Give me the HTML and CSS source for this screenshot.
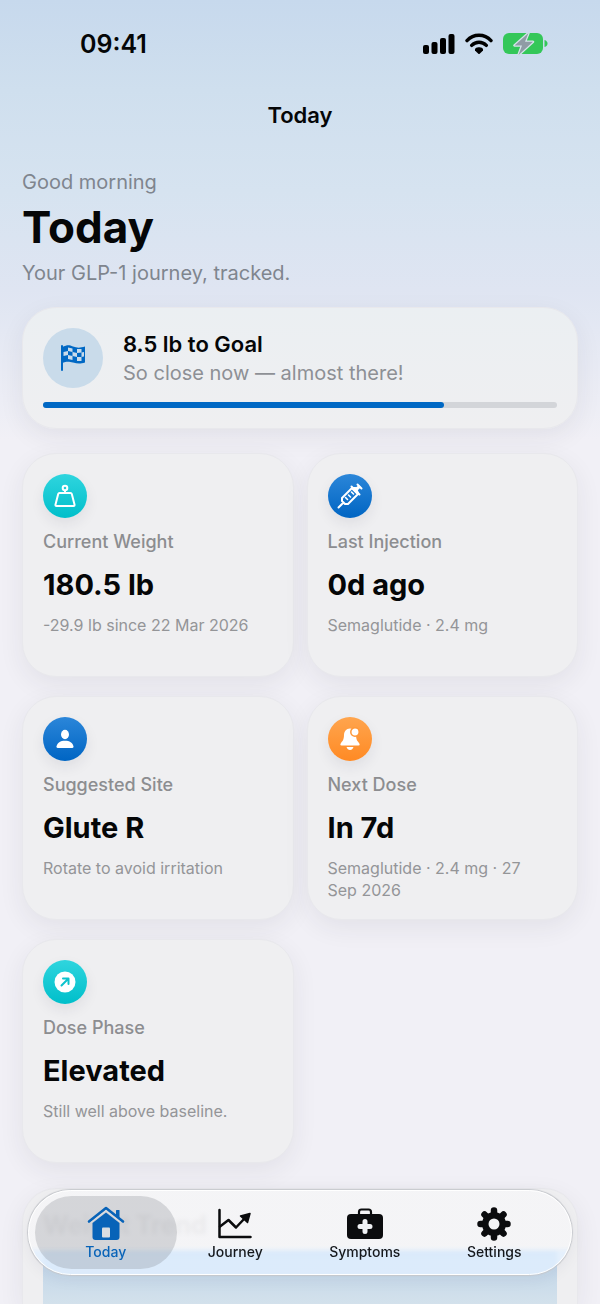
FILE: index.html
```html
<!doctype html>
<html lang="en">
<head>
    <meta charset="UTF-8">
    <meta name="viewport" content="width=device-width, initial-scale=1.0">
    <title>Today</title>
    <link rel="stylesheet" href="styles.css">
</head>
<body>
    <!-- Status bar -->
    <div class="status-bar">
        <span class="clock">09:41</span>
        <div class="status-icons">
            <svg width="32" height="22" viewBox="0 0 32 22">
                <rect x="0" y="12" width="6" height="9" rx="2"/>
                <rect x="8.500" y="9" width="6" height="12" rx="2"/>
                <rect x="17" y="5" width="6" height="16" rx="2"/>
                <rect x="25.500" y="1" width="6" height="20" rx="2"/>
            </svg>
            <svg width="28" height="22" viewBox="0 0 28 22">
                <path d="M2 7.6C8.5 .4 19.500 .4 26 7.600M6.700 12.400C10.800 8.200 17.200 8.200 21.300 12.400" fill="none" stroke="#000" stroke-width="3.400" stroke-linecap="round"/>
                <path d="M10 17.500C9.500 15 12 14.300 14 14.300S18.500 15 18 17.500L14.700 20.700Q14 21.300 13.300 20.700Z"/>
            </svg>
            <svg width="45" height="22" viewBox="0 0 45 22">
                <rect width="40" height="21" rx="6" fill="#34c759"/>
                <path d="M41.500 7Q44.500 8 44.500 10.500T41.500 14Z" fill="#34c759"/>
                <path d="M25.500 0L11.500 12.500H19L15.500 22L30 8.800H22Z" fill="#8f9ca5" stroke="#d5e4ea" stroke-width="2.500" stroke-linejoin="round" paint-order="stroke"/>
            </svg>
        </div>
    </div>

    <div class="nav-title">Today</div>

    <main>
        <header class="intro">
            <p>Good morning</p>
            <h1>Today</h1>
            <p>Your GLP-1 journey, tracked.</p>
        </header>

        <!-- Goal -->
        <section class="card goal">
            <div class="goal-top">
                <div class="goal-icon">
                    <svg width="26" height="28" viewBox="0 0 26 28">
                        <path d="M2 2V26" stroke="#0068c4" stroke-width="2" stroke-linecap="round"/>
                        <path d="M2 3C8 .5 9 1 13 2.500S20 4 25 2.500V18.500C20 20 17 19.500 13 18.500S7 17 2 19Z" fill="#0068c4"/>
                        <path d="M8 3.500L12.500 4.500V8L8 7ZM17 5L21.500 5V8.500L17 9ZM3.500 8L8 7V11L3.500 12ZM12.500 8L17 9V13L12.500 12ZM21.500 8.500L24 8V12.500L21.500 13ZM8 11L12.500 12V16L8 15ZM17 13L21.500 13V17L17 17Z" fill="#c9dbea"/>
                    </svg>
                </div>
                <div>
                    <h2>8.5 lb to Goal</h2>
                    <p>So close now — almost there!</p>
                </div>
            </div>
            <div class="track"><div class="fill" style="width: 78%"></div></div>
        </section>

        <!-- Stats -->
        <div class="grid">
            <section class="card stat">
                <div class="badge teal">
                    <svg width="24" height="24" viewBox="0 0 24 24" fill="none" stroke="#fff" stroke-width="2" stroke-linejoin="round">
                        <circle cx="12" cy="4" r="2.300"/>
                        <path d="M12 6.500V9M6.500 9H17.500Q18.500 9 18.800 10L21.500 20.500Q21.800 22 20.500 22H3.500Q2.200 22 2.500 20.500L5.200 10Q5.500 9 6.500 9Z"/>
                    </svg>
                </div>
                <h3>Current Weight</h3>
                <strong>180.5 lb</strong>
                <p>-29.9 lb since 22 Mar 2026</p>
            </section>
            <section class="card stat">
                <div class="badge blue">
                    <svg width="26" height="26" viewBox="0 0 26 26" fill="none" stroke="#fff" stroke-width="2" stroke-linecap="round" stroke-linejoin="round">
                        <path d="M1.500 24.500L6 20M5 18L8 21L11 21L21 11L15 5L5 15ZM14.500 3.500L22.500 11.500M18 7L22 3M20.500 1.500L24.500 5.500" />
                        <path d="M16 5.500L20.500 10L18.500 5.500ZM20 6L22 4" stroke-width="3"/>
                        <path d="M8.500 14.500L10.500 16.500M11.500 12L13.500 14M14.500 9L16.500 11" stroke-width="1.600"/>
                    </svg>
                </div>
                <h3>Last Injection</h3>
                <strong>0d ago</strong>
                <p>Semaglutide · 2.4 mg</p>
            </section>
            <section class="card stat">
                <div class="badge blue">
                    <svg width="24" height="24" viewBox="0 0 24 24" fill="#fff">
                        <ellipse cx="12" cy="7.500" rx="4" ry="4.700"/>
                        <path d="M5 21Q3.300 21 3.500 19.500C4.200 15.800 7.500 13.800 12 13.800S19.800 15.800 20.500 19.500Q20.700 21 19 21Z"/>
                    </svg>
                </div>
                <h3>Suggested Site</h3>
                <strong>Glute R</strong>
                <p>Rotate to avoid irritation</p>
            </section>
            <section class="card stat">
                <div class="badge orange">
                    <svg width="24" height="24" viewBox="0 0 24 24" fill="#fff">
                        <path d="M12 1.500C8 1.500 6.200 4.500 6 8C5.900 13 4.500 14 3 16Q1.500 18.500 3.500 18.500H20.500Q22.500 18.500 21 16C19.500 14 18.100 13 18 8C17.800 4.500 16 1.500 12 1.500Z"/>
                        <path d="M8.500 20H15.500Q14.500 23 12 23T8.500 20Z"/>
                        <circle cx="17" cy="5" r="4.200" stroke="#ff9838" stroke-width="1.500"/>
                    </svg>
                </div>
                <h3>Next Dose</h3>
                <strong>In 7d</strong>
                <p>Semaglutide · 2.4 mg · 27 Sep 2026</p>
            </section>
            <section class="card stat">
                <div class="badge teal">
                    <svg width="24" height="24" viewBox="0 0 24 24">
                        <circle cx="12" cy="12" r="10.500" fill="#fff"/>
                        <path d="M8.500 15.500L15 9M10 8.500H15.500V14" fill="none" stroke="#0cc3cd" stroke-width="2" stroke-linecap="round" stroke-linejoin="round"/>
                    </svg>
                </div>
                <h3>Dose Phase</h3>
                <strong>Elevated</strong>
                <p>Still well above baseline.</p>
            </section>
        </div>

        <section class="card trend">
            <h2>Weight Trend</h2>
            <div class="chart"></div>
        </section>
    </main>

    <!-- Tab bar -->
    <nav class="tabs">
        <a href="#today" class="active">
            <svg width="38" height="36" viewBox="0 0 38 36" fill="#0863b8">
                <path d="M2 16.500L19 3L36 16.500" fill="none" stroke="#0863b8" stroke-width="2.600" stroke-linecap="round" stroke-linejoin="round"/>
                <path d="M29 5.500Q29 5 29.500 5H32Q32.500 5 32.500 5.500V13L29 10Z"/>
                <path d="M19 7.500L32.500 18V32Q32.500 35 29.500 35H8.500Q5.500 35 5.500 32V18Z"/>
                <path d="M4 17.500L19 5.700L34 17.500" fill="none" stroke="#d9dde2" stroke-width="1"/>
                <rect x="15" y="22.500" width="8" height="10" rx="1" fill="#d9dde2"/>
            </svg>
            <span>Today</span>
        </a>
        <a href="#journey">
            <svg width="38" height="36" viewBox="0 0 38 36" fill="none" stroke="#0b0c0e" stroke-width="2.500" stroke-linecap="round" stroke-linejoin="round">
                <path d="M3.500 5V32H34.500"/>
                <path d="M4 21.500L12.500 15L20 22.500L29 13"/>
                <path d="M24.500 11L34 8.500L31.500 17.500Z" fill="#0b0c0e" stroke-width="1.500"/>
            </svg>
            <span>Journey</span>
        </a>
        <a href="#symptoms">
            <svg width="38" height="36" viewBox="0 0 38 36">
                <path d="M13 9V7Q13 4.500 15.500 4.500H22.500Q25 4.500 25 7V9" fill="none" stroke="#0b0c0e" stroke-width="2.200"/>
                <rect x="1" y="9" width="36" height="25" rx="4" fill="#0b0c0e"/>
                <path d="M19 16.500V26.500M14 21.500H24" stroke="#f0f2f5" stroke-width="5" stroke-linecap="round"/>
            </svg>
            <span>Symptoms</span>
        </a>
        <a href="#settings">
            <svg width="38" height="36" viewBox="0 0 38 36">
                <g stroke="#0b0c0e" stroke-width="6.500" stroke-linecap="round">
                    <path d="M19 5.500V32.500M5.500 19H32.500M9.500 9.500L28.500 28.500M28.500 9.500L9.500 28.500"/>
                </g>
                <circle cx="19" cy="19" r="12" fill="#0b0c0e"/>
                <circle cx="19" cy="19" r="5.500" fill="#f3f4f6"/>
            </svg>
            <span>Settings</span>
        </a>
    </nav>
</body>
</html>
```
FILE: styles.css
```css
* {
    box-sizing: border-box;
    margin: 0;
}
body {
    display: flex;
    flex-direction: column;
    height: 100vh;
    overflow: hidden;
    font-family: Inter, "Liberation Sans", sans-serif;
    color: #050607;
    background: #f1f0f6 linear-gradient(#c7d9ed 0, #cfdfee 90px, #d6e3f0 190px, #dfe5f2 290px, #f1f0f6 440px) no-repeat;
}
.status-bar {
    display: flex;
    flex-shrink: 0;
    justify-content: space-between;
    align-items: center;
    height: 88px;
    padding: 0 52px 0 80px;
}
.clock {
    font-size: 25px;
    font-weight: 600;
}
.status-icons {
    display: flex;
    gap: 10px;
}
.nav-title {
    flex-shrink: 0;
    line-height: 54px;
    text-align: center;
    font-size: 22px;
    font-weight: 600;
}
main {
    flex: 1;
    display: flex;
    flex-direction: column;
    min-height: 0;
    padding: 26px 22px 0;
}
.intro {
    margin-bottom: 20px;
}
.intro p {
    font-size: 20px;
    line-height: 28px;
    color: #7f858e;
}
.intro h1 {
    font-size: 44px;
    line-height: 63px;
}
.card {
    background: #efeff1;
    border: 1px solid #e8e8ec;
    border-radius: 34px;
    box-shadow: 0 8px 26px rgba(40, 40, 60, 0.07);
    padding: 20px;
}

/* Goal card */
.goal {
    background: linear-gradient(#ebeff2, #efeff1);
    margin-bottom: 24px;
}
.goal-top {
    display: flex;
    align-items: center;
    gap: 20px;
    margin-bottom: 14px;
}
.goal-icon {
    display: flex;
    align-items: center;
    justify-content: center;
    width: 60px;
    height: 60px;
    border-radius: 50%;
    background: #c9dbea;
}
.goal h2 {
    font-size: 22px;
    line-height: 30px;
    font-weight: 600;
}
.goal p {
    font-size: 20px;
    line-height: 28px;
    color: #8d9095;
}
.track {
    height: 6px;
    border-radius: 3px;
    background: #d3d5d9;
}
.fill {
    height: 6px;
    border-radius: 3px;
    background: #0068c4;
}

/* Stat cards */
.grid {
    display: grid;
    grid-template-columns: 1fr 1fr;
    grid-auto-rows: 224px;
    gap: 19px 13px;
    margin-bottom: 25px;
}
.badge {
    display: flex;
    align-items: center;
    justify-content: center;
    width: 44px;
    height: 44px;
    margin-bottom: 12px;
    border-radius: 50%;
    box-shadow: 0 6px 14px rgba(40, 40, 60, 0.08);
}
.teal {
    background: linear-gradient(#2fd5de, #00bfca);
}
.blue {
    background: linear-gradient(#2b86d9, #0065c3);
}
.orange {
    background: linear-gradient(#ffa54e, #ff8a24);
}
.stat h3 {
    font-size: 18px;
    line-height: 24px;
    font-weight: 500;
    color: #8c8d90;
}
.stat strong {
    display: block;
    margin: 10px 0 8px;
    font-size: 29px;
    line-height: 42px;
}
.stat p {
    max-width: 216px;
    font-size: 16px;
    line-height: 22px;
    color: #949598;
}

/* The trend card fills what is left and slides under the tab bar */
.trend {
    flex: 1;
    display: flex;
    flex-direction: column;
    min-height: 0;
    padding-bottom: 0;
    border-bottom: none;
    border-radius: 34px 34px 0 0;
}
.trend h2 {
    font-size: 25px;
    line-height: 32px;
    margin-bottom: 9px;
}
.chart {
    flex: 1;
    background: linear-gradient(#bcd2e8, #d6e3ec 60px);
}

/* Tab bar */
.tabs {
    position: fixed;
    left: 28px;
    right: 28px;
    bottom: 29px;
    display: flex;
    height: 85px;
    padding: 5px 12px;
    border: 1px solid #fff;
    border-radius: 43px;
    background: linear-gradient(rgba(244, 244, 246, 0.96) 55px, rgba(226, 240, 255, 0.8) 62px);
    backdrop-filter: blur(2px);
    box-shadow: 0 0 1px 1px #c6c8cd, 0 4px 16px rgba(40, 40, 60, 0.06);
}
.tabs a {
    position: relative;
    flex: 1;
    display: flex;
    flex-direction: column;
    align-items: center;
    padding-top: 9px;
    font-size: 14px;
    line-height: 22px;
    font-weight: 500;
    color: #15181c;
    text-decoration: none;
}
.tabs .active {
    color: #0863b8;
}
.tabs .active::before {
    content: "";
    position: absolute;
    inset: 0 -6px;
    border-radius: 37px;
    background: rgba(120, 125, 130, 0.26);
}
.tabs svg,
.tabs span {
    position: relative;
}
```
